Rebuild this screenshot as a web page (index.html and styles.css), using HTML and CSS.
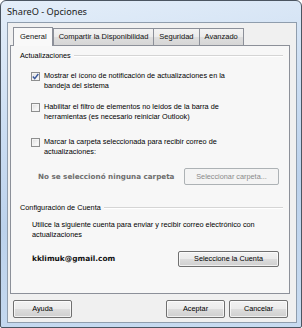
FILE: index.html
```html
<!DOCTYPE html>
<html lang="es">
<head>
<meta charset="utf-8">
<title>ShareO - Opciones</title>
<link rel="stylesheet" href="styles.css">
</head>
<body>
<div class="window">
  <div class="titlebar">ShareO - Opciones</div>
  <div class="client">
    <div class="tabs">
      <div class="tab active">General</div>
      <div class="tab">Compartir la Disponibilidad</div>
      <div class="tab">Seguridad</div>
      <div class="tab">Avanzado</div>
    </div>
    <div class="panel">
      <div class="group-head"><span>Actualizaciones</span><i class="rule"></i></div>
      <div class="check first">
        <span class="box checked"><svg viewBox="0 0 9 9" width="9" height="9"><path d="M1.8 4.6 L3.7 6.6 L7.3 2.0" fill="none" stroke="#3c5a9c" stroke-width="1.5"/></svg></span>
        <span class="txt">Mostrar el ícono de notificación de actualizaciones en la<br>bandeja del sistema</span>
      </div>
      <div class="check second">
        <span class="box"></span>
        <span class="txt">Habilitar el filtro de elementos no leídos de la barra de<br>herramientas (es necesario reiniciar Outlook)</span>
      </div>
      <div class="check third">
        <span class="box"></span>
        <span class="txt">Marcar la carpeta seleccionada para recibir correo de<br>actualizaciones:</span>
      </div>
      <div class="folder-row">
        <span class="nofolder">No se seleccionó ninguna carpeta</span>
        <button class="btn disabled folder-btn">Seleccionar carpeta...</button>
      </div>
      <div class="group-head account-head"><span>Configuración de Cuenta</span><i class="rule"></i></div>
      <p class="info">Utilice la siguiente cuenta para enviar y recibir correo electrónico con<br>actualizaciones</p>
      <div class="account-row">
        <span class="email">kklimuk@gmail.com</span>
        <button class="btn account-btn">Seleccione la Cuenta</button>
      </div>
    </div>
    <div class="footer">
      <button class="btn foot-btn">Ayuda</button>
      <span class="spacer"></span>
      <button class="btn foot-btn">Aceptar</button>
      <button class="btn foot-btn">Cancelar</button>
    </div>
  </div>
</div>
</body>
</html>
```

FILE: styles.css
```css
* { box-sizing: border-box; }
html, body { margin: 0; padding: 0; background: #ffffff; }
body { width: 302px; height: 328px; overflow: hidden; }

.window {
  width: 302px;
  height: 328px;
  border: 1px solid #4b5561;
  border-radius: 6px 6px 2px 2px;
  background: linear-gradient(170deg, #e4eef9 0%, #cbddf2 35%, #bcd2ec 60%, #c8dbf0 100%);
  padding: 0 4px 4px 6px;
  display: flex;
  flex-direction: column;
}

.titlebar {
  height: 21px;
  line-height: 21px;
  font-family: "Noto Sans", "Open Sans", sans-serif;
  font-size: 9.2px;
  color: #1a1a1a;
}

.client {
  flex: 1;
  background: #f0f0f0;
  border: 1px solid #8f9dad;
  display: flex;
  flex-direction: column;
  font-family: "Liberation Sans", Arial, sans-serif;
  font-size: 7.3px;
  line-height: 10px;
  color: #000;
}

.tabs {
  display: flex;
  align-items: flex-end;
  height: 22px;
  padding-left: 5px;
  position: relative;
  z-index: 1;
  font-size: 7.5px;
}

.tab {
  height: 17px;
  line-height: 15px;
  padding: 0 5px;
  border: 1px solid #8c9099;
  border-bottom: none;
  background: linear-gradient(#f3f3f3 0%, #ebebeb 50%, #dedede 51%, #d6d6d6 100%);
  margin-left: -1px;
  color: #111;
}
.tab:first-child { margin-left: 0; }
.tab.active {
  height: 19px;
  line-height: 17px;
  padding: 0 5px 0 6px;
  background: #f9f9f9;
  margin-bottom: -1px;
  position: relative;
  z-index: 2;
  margin-right: 1px;
}

.panel {
  margin: 0 6px 0 2px;
  height: 249px;
  border: 1px solid #8c9099;
  background: #f7f7f7;
  padding: 5px 6px 0 9px;
  display: flex;
  flex-direction: column;
}

.group-head {
  display: flex;
  align-items: center;
  height: 10px;
  color: #000;
}
.group-head span { white-space: nowrap; }
.rule {
  flex: 1;
  height: 2px;
  margin-left: 3px;
  border-top: 1px solid #d5d5d5;
  border-bottom: 1px solid #ffffff;
}

.check {
  display: flex;
  align-items: flex-start;
  padding-left: 11px;
}
.check.first { margin-top: 10px; }
.check.second { margin-top: 11px; }
.check.third { margin-top: 15px; }

.box {
  flex: none;
  width: 9px;
  height: 9px;
  margin-top: 1px;
  margin-right: 4px;
  border: 1px solid #8e8f8f;
  background: linear-gradient(135deg, #dcdcdc 0%, #f4f4f4 60%, #ffffff 100%);
  box-shadow: inset 0 0 0 1px #f4f4f4;
  position: relative;
}
.box svg {
  position: absolute;
  left: -1px;
  top: -1px;
}

.txt { white-space: nowrap; }

.folder-row {
  display: flex;
  align-items: center;
  margin-top: 11px;
  padding-left: 18px;
  padding-right: 4px;
}
.nofolder {
  font-family: "DejaVu Sans", Verdana, sans-serif;
  font-weight: bold;
  font-size: 7.2px;
  color: #6e6e6e;
  white-space: nowrap;
}

.btn {
  font-family: "Liberation Sans", Arial, sans-serif;
  font-size: 7.3px;
  line-height: 10px;
  color: #000;
  padding: 0;
  border: 1px solid #707070;
  border-radius: 2px;
  background: linear-gradient(#f2f2f2 0%, #ebebeb 50%, #dddddd 51%, #cfcfcf 100%);
  box-shadow: inset 0 0 0 1px rgba(255,255,255,0.7);
  text-align: center;
}
.btn.disabled {
  border-color: #adb2b5;
  background: #f4f4f4;
  color: #8a8a8a;
  box-shadow: none;
}

.folder-btn {
  margin-left: auto;
  width: 95px;
  height: 17px;
}

.account-head { margin-top: 18px; }

.info {
  margin: 7px 0 0;
  padding-left: 12px;
  white-space: nowrap;
}

.account-row {
  display: flex;
  align-items: center;
  margin-top: 11px;
  padding-left: 12px;
  padding-right: 4px;
}
.email {
  font-family: "DejaVu Sans", Verdana, sans-serif;
  font-weight: bold;
  font-size: 7.4px;
  color: #111;
}
.account-btn {
  margin-left: auto;
  width: 101px;
  height: 16px;
}

.footer {
  display: flex;
  align-items: center;
  padding: 6px 8px 0 5px;
  gap: 4px;
}
.spacer { flex: 1; }
.foot-btn {
  width: 59px;
  height: 18px;
}
```
